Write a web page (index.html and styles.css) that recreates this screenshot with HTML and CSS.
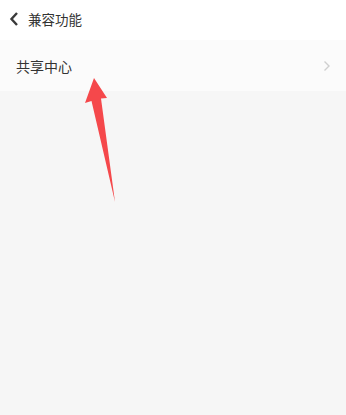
FILE: index.html
```html
<!DOCTYPE html>
<html>
<head>
<meta charset="utf-8">
<link rel="stylesheet" href="styles.css">
</head>
<body>
<div class="page">
  <header class="nav">
    <svg class="back" width="10" height="14" viewBox="0 0 10 14"><path d="M8 1 L2.5 7 L8 13" fill="none" stroke="#3a3a3a" stroke-width="2.4"/></svg>
    <span class="title">兼容功能</span>
  </header>
  <div class="row">
    <span class="label">共享中心</span>
    <svg class="chev" width="8" height="12" viewBox="0 0 8 12"><path d="M1.5 1.5 L6 6 L1.5 10.5" fill="none" stroke="#cfcfcf" stroke-width="1.4"/></svg>
  </div>
  <svg class="arrow" width="346" height="415" viewBox="0 0 346 415">
    <polygon points="94,78 107,98 101,98.5 115,202 91.5,101 85,103" fill="#f5484b"/>
  </svg>
</div>
</body>
</html>
```

FILE: styles.css
```css
html, body {
  margin: 0;
  padding: 0;
  background: #f6f6f6;
}
.page {
  position: relative;
  width: 346px;
  height: 415px;
  font-family: "Noto Sans CJK SC", "Noto Sans", sans-serif;
  background: #f6f6f6;
  overflow: hidden;
}
.nav {
  height: 40px;
  background: #ffffff;
  display: flex;
  align-items: center;
  padding-left: 9px;
  padding-bottom: 2px;
  box-sizing: border-box;
}
.back {
  margin-right: 9px;
}
.title {
  font-size: 13.5px;
  color: #333;
}
.row {
  height: 51px;
  background: #fbfbfb;
  display: flex;
  align-items: center;
  justify-content: space-between;
  padding: 0 15px 0 16px;
  box-sizing: border-box;
}
.label {
  font-size: 14px;
  color: #333;
}
.arrow {
  position: absolute;
  left: 0;
  top: 0;
}
```
